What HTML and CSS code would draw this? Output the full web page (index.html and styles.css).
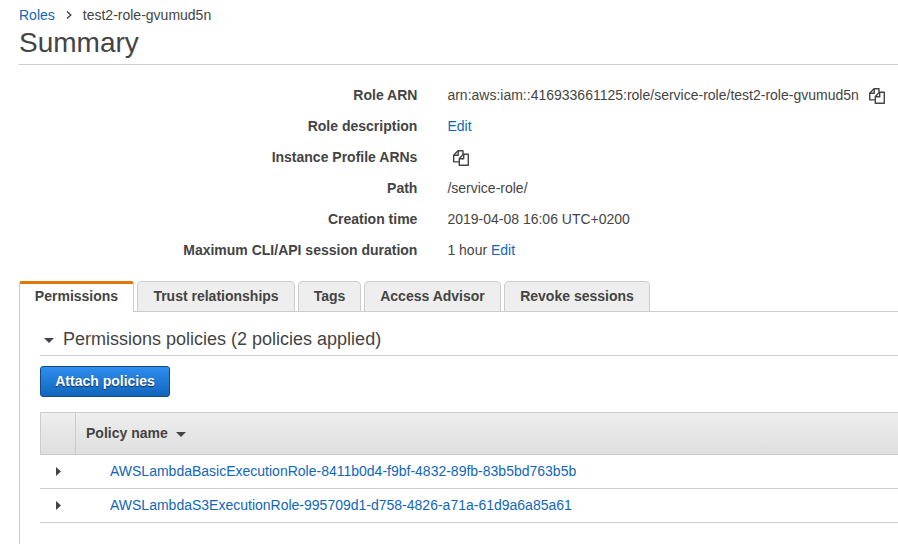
FILE: index.html
```html
<!DOCTYPE html>
<html lang="en">
<head>
<meta charset="utf-8">
<title>Role summary</title>
<link rel="stylesheet" href="styles.css">
</head>
<body>
<svg class="defs" width="0" height="0" aria-hidden="true">
  <symbol id="copy" viewBox="0 0 16 16">
    <g fill="none" stroke="#444" stroke-width="1.4" stroke-linejoin="round">
      <path d="M6.3 11.9H.7V5.2L5 .7H10V4.2"/>
      <path d="M.8 5.3H5.2V.8"/>
      <path d="M10.4 4.2H15.3V15.3H6.3V8.4Z"/>
      <path d="M6.3 8.8H10.7V4.3"/>
    </g>
  </symbol>
</svg>
<main class="page">
  <nav class="crumbs">
    <a href="#">Roles</a>
    <svg class="chevron" viewBox="0 0 6 8"><path d="M1 .5L4.8 4L1 7.5"/></svg>
    <span>test2-role-gvumud5n</span>
  </nav>
  <h1>Summary</h1>
  <dl class="details">
    <dt>Role ARN</dt>
    <dd><span class="arn">arn:aws:iam::416933661125:role/service-role/test2-role-gvumud5n</span><svg class="copy copy-after"><use href="#copy"/></svg></dd>
    <dt>Role description</dt>
    <dd><a href="#">Edit</a></dd>
    <dt>Instance Profile ARNs</dt>
    <dd><svg class="copy copy-only"><use href="#copy"/></svg></dd>
    <dt>Path</dt>
    <dd>/service-role/</dd>
    <dt>Creation time</dt>
    <dd>2019-04-08 16:06 UTC+0200</dd>
    <dt>Maximum CLI/API session duration</dt>
    <dd>1 hour&nbsp;<a href="#">Edit</a></dd>
  </dl>
  <div class="tabs">
    <div class="tab active t1"><span>Permissions</span></div>
    <div class="tab t2"><span>Trust relationships</span></div>
    <div class="tab t3"><span>Tags</span></div>
    <div class="tab t4"><span>Access Advisor</span></div>
    <div class="tab t5"><span>Revoke sessions</span></div>
  </div>
  <section class="panel">
    <h2><svg class="down" viewBox="0 0 10 5"><path d="M0 0H10L5 5Z"/></svg><span>Permissions policies (2 policies applied)</span></h2>
    <button class="attach">Attach policies</button>
    <div class="table">
      <div class="head">
        <div class="toggle"></div>
        <div class="name"><span>Policy name</span><svg class="down" viewBox="0 0 10 5"><path d="M0 0H10L5 5Z"/></svg></div>
      </div>
      <div class="row"><svg class="right" viewBox="0 0 5 9"><path d="M0 0L5 4.5L0 9Z"/></svg><a href="#">AWSLambdaBasicExecutionRole-8411b0d4-f9bf-4832-89fb-83b5bd763b5b</a></div>
      <div class="row"><svg class="right" viewBox="0 0 5 9"><path d="M0 0L5 4.5L0 9Z"/></svg><a href="#">AWSLambdaS3ExecutionRole-995709d1-d758-4826-a71a-61d9a6a85a61</a></div>
    </div>
  </section>
</main>
</body>
</html>
```
FILE: styles.css
```css
* { box-sizing: border-box; }
html { overflow: hidden; }
body {
  margin: 0;
  height: 544px;
  overflow: hidden;
  background: #fff;
  color: #444;
  font: 14px/20px "Liberation Sans", Arial, sans-serif;
  white-space: nowrap;
}
a { color: #1166bb; text-decoration: none; }
svg { display: block; flex: none; }
.defs { position: absolute; }
.page { display: flex; flex-direction: column; height: 544px; padding: 5px 0 0 19px; }
.crumbs { display: flex; align-items: center; height: 20px; }
.chevron { width: 6px; height: 8px; margin: 0 11px; fill: none; stroke: #444; stroke-width: 1.4; }
h1 { margin: 0; height: 40px; font-size: 28px; line-height: 35px; font-weight: 400; border-bottom: 1px solid #ccc; }
.details {
  display: grid;
  grid-template-columns: 398.4px 1fr;
  grid-auto-rows: 31px;
  column-gap: 30px;
  margin: 15px 0 15px;
}
.details dt { font-weight: 700; text-align: right; line-height: 31px; }
.details dd { display: flex; align-items: center; height: 30px; margin: 0; }
.copy { width: 16px; height: 16px; }
.copy-after { margin: 2px 0 0 10px; }
.copy-only { margin: 1px 0 0 5.6px; }
.tabs { display: flex; gap: 3px; height: 31px; border-bottom: 1px solid #ccc; }
.tab {
  display: flex;
  justify-content: center;
  height: 30px;
  border: 1px solid #ccc;
  border-bottom: 0;
  border-radius: 5px 5px 0 0;
  background: #eee;
  font-weight: 700;
  line-height: 29px;
}
.active { height: 31px; border-top: 3px solid #e07700; border-radius: 3px 3px 0 0; background: #fff; line-height: 25px; }
.t1 { width: 115px; }
.t2 { width: 158px; }
.t3 { width: 63px; }
.t4 { width: 137px; }
.t5 { width: 146px; }
.panel { flex: 1; padding-left: 20px; border-left: 1px solid #ccc; }
h2 { display: flex; align-items: center; height: 44px; margin: 0; padding-top: 11px; border-bottom: 1px solid #ccc; font-size: 18px; font-weight: 400; }
.down { width: 10px; height: 5px; fill: #444; }
h2 .down { margin: 2px 9px 0 4px; }
.attach {
  display: block;
  width: 130px;
  height: 31px;
  margin: 10px 0 15px;
  padding: 0 0 1px;
  border: 1px solid #124a86;
  border-radius: 3px;
  background: linear-gradient(#2e8df0, #1166bb);
  color: #fff;
  font: 700 14px/28px "Liberation Sans", Arial, sans-serif;
  text-shadow: 0 1px 1px #0a315e;
}
.head { display: flex; height: 43px; border: solid #ccc; border-width: 1px 0 1px 1px; background: linear-gradient(#eee, #dfdfdf); font-weight: 700; }
.toggle { width: 35px; border-right: 1px solid #ccc; }
.name { display: flex; align-items: center; padding: 0 0 1px 10px; }
.name .down { margin: 3px 0 0 8px; }
.row { display: flex; align-items: center; height: 34px; padding-bottom: 1px; border-bottom: 1px solid #ccc; }
.right { width: 5px; height: 9px; margin: 1px 49px 0 16px; fill: #444; }
```
